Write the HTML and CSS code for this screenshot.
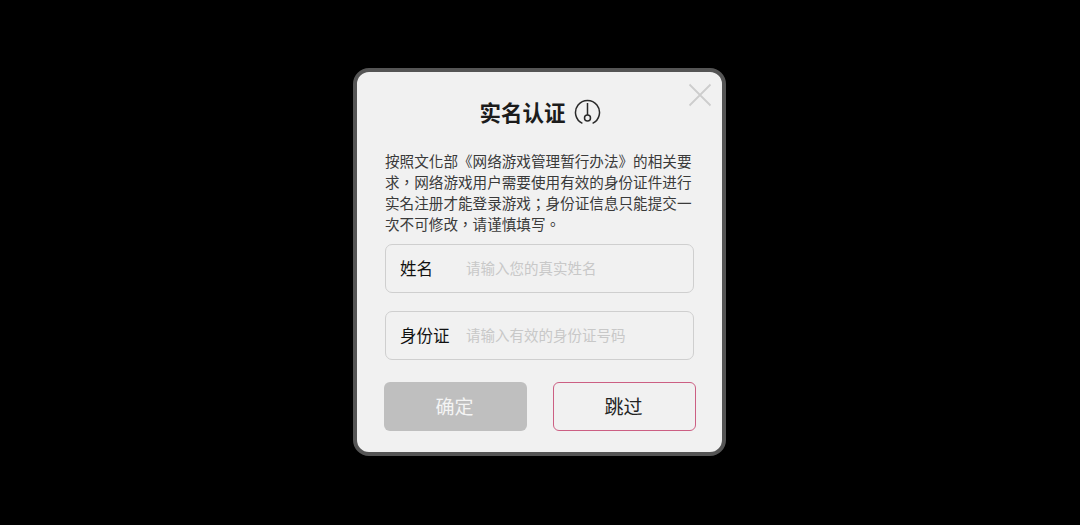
FILE: index.html
```html
<!DOCTYPE html>
<html lang="zh-CN">

<head>
    <meta charset="UTF-8">
    <title>实名认证</title>
    <link rel="stylesheet" href="styles.css">
</head>

<body>

    <section class="dialog">
        <svg class="close" width="24" height="24" viewBox="0 0 24 24">
            <path d="M1.5 1.5L22.5 22.5M22.5 1.5L1.5 22.5" />
        </svg>

        <h1 class="title">
            <span>实名认证</span>
            <svg class="info" width="27" height="27" viewBox="0 0 27 27">
                <path d="M18.6 24.4A12 12 0 1 0 8.4 24.4" />
                <path d="M13.5 4V16" />
                <circle cx="13.5" cy="19" r="3" />
            </svg>
        </h1>

        <p class="notice" lang="zh-TW">按照文化部《网络游戏管理暂行办法》的相关要求，网络游戏用户需要使用有效的身份证件进行实名注册才能登录游戏；身份证信息只能提交一次不可修改，请谨慎填写。</p>

        <div class="field">
            <label>姓名</label>
            <span class="hint">请输入您的真实姓名</span>
        </div>
        <div class="field">
            <label>身份证</label>
            <span class="hint">请输入有效的身份证号码</span>
        </div>

        <div class="buttons">
            <button class="ok">确定</button>
            <button class="skip">跳过</button>
        </div>
    </section>

</body>

</html>
```

FILE: styles.css
```css
* {
    box-sizing: border-box;
}

body {
    margin: 0;
    height: 525px;
    padding-right: 1px;
    background-color: #000;
    font-family: "Noto Sans CJK SC", "Liberation Sans", sans-serif;
    display: flex;
    justify-content: center;
    align-items: flex-start;
    overflow: hidden;
}

.dialog {
    position: relative;
    width: 373px;
    height: 388px;
    margin-top: 68px;
    padding: 25px 28px 0 28px;
    background-color: #f1f1f1;
    border: 4px solid #555;
    border-radius: 16px;
}

.close {
    position: absolute;
    top: 11px;
    right: 10px;
}

.close path {
    fill: none;
    stroke: #cdcdcd;
    stroke-width: 1.8;
}

.title {
    display: flex;
    justify-content: center;
    align-items: center;
    gap: 8px;
    height: 30px;
    margin: 0;
    padding-left: 1px;
    font-size: 21.5px;
    line-height: 30px;
    font-weight: 700;
    color: #1c1c1c;
}

.info {
    margin-top: 1px;
    fill: none;
    stroke: #2a2a2a;
    stroke-width: 1.5;
}

.notice {
    width: 307px;
    margin: 23px 0 0 0;
    font-family: "Noto Sans CJK TC", sans-serif;
    font-size: 14.6px;
    line-height: 21px;
    color: #3a3a3a;
}

.field {
    display: flex;
    align-items: center;
    width: 309px;
    height: 49px;
    margin: 18px 0 0 0;
    padding: 0 0 2px 14px;
    border: 1px solid #cfcfcf;
    border-radius: 7px;
}

.notice + .field {
    margin-top: 10px;
}

.field label {
    width: 66px;
    font-size: 16.5px;
    color: #111;
}

.hint {
    font-size: 14.5px;
    color: #c8c8c8;
}

.buttons {
    display: flex;
    justify-content: space-between;
    width: 312px;
    margin: 22px 0 0 -1px;
}

button {
    width: 143px;
    height: 49px;
    padding: 0 2px 2px 0;
    border-radius: 6px;
    font-family: inherit;
    font-size: 19px;
}

.ok {
    background-color: #bfbfbf;
    border: none;
    color: #f4f4f4;
}

.skip {
    background-color: #f1f1f1;
    border: 1.5px solid #cc5f83;
    color: #222;
}
```
